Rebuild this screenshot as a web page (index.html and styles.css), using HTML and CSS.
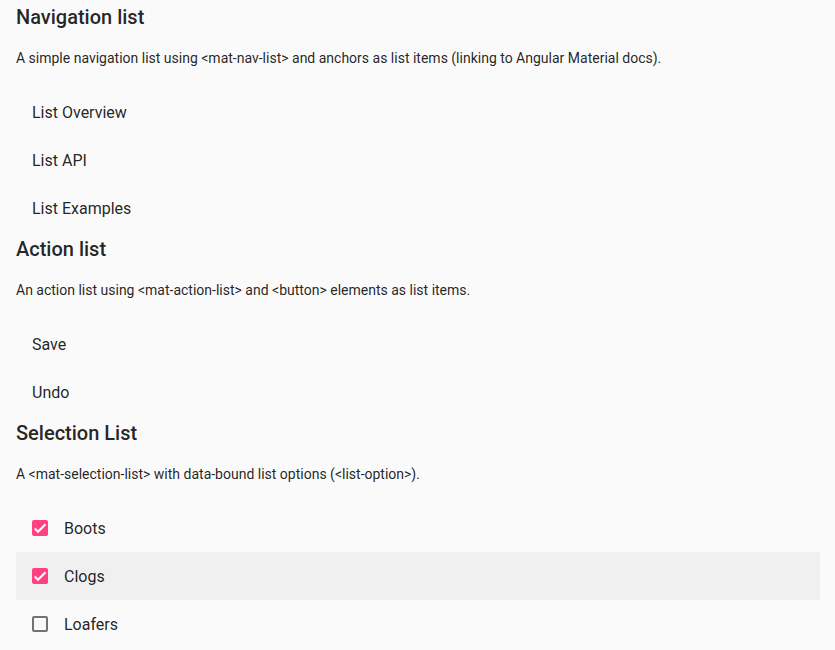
FILE: index.html
```html
<!DOCTYPE html>
<html>
<head>
<meta charset="utf-8">
<link rel="stylesheet" href="styles.css">
</head>
<body>
<div class="page">
  <h2 class="title">Navigation list</h2>
  <p class="desc">A simple navigation list using &lt;mat-nav-list&gt; and anchors as list items (linking to Angular Material docs).</p>
  <div class="list">
    <a class="item">List Overview</a>
    <a class="item">List API</a>
    <a class="item">List Examples</a>
  </div>

  <h2 class="title">Action list</h2>
  <p class="desc">An action list using &lt;mat-action-list&gt; and &lt;button&gt; elements as list items.</p>
  <div class="list">
    <div class="item">Save</div>
    <div class="item">Undo</div>
  </div>

  <h2 class="title">Selection List</h2>
  <p class="desc">A &lt;mat-selection-list&gt; with data-bound list options (&lt;list-option&gt;).</p>
  <div class="list">
    <div class="item option">
      <span class="box checked"><svg viewBox="0 0 24 24" width="16" height="16"><path d="M4.1 12.7 9 17.6 20.3 6.3" fill="none" stroke="#fafafa" stroke-width="3.2"/></svg></span>
      <span>Boots</span>
    </div>
    <div class="item option hover">
      <span class="box checked"><svg viewBox="0 0 24 24" width="16" height="16"><path d="M4.1 12.7 9 17.6 20.3 6.3" fill="none" stroke="#fafafa" stroke-width="3.2"/></svg></span>
      <span>Clogs</span>
    </div>
    <div class="item option">
      <span class="box"></span>
      <span>Loafers</span>
    </div>
  </div>
</div>
</body>
</html>
```

FILE: styles.css
```css
html, body {
  margin: 0;
  padding: 0;
  background: #fafafa;
}
body {
  font-family: Roboto, "Liberation Sans", sans-serif;
  color: rgba(0, 0, 0, 0.87);
}
.page {
  padding: 0 15px 0 16px;
}
.title {
  margin: 0 0 15px;
  padding-top: 1px;
  font-size: 20px;
  font-weight: 500;
  line-height: 32px;
}
.desc {
  margin: 0 0 12px;
  font-size: 14px;
  line-height: 20px;
}
.list {
  padding-top: 8px;
}
.item {
  display: flex;
  align-items: center;
  height: 48px;
  padding: 0 16px;
  font-size: 16px;
  color: rgba(0, 0, 0, 0.87);
  text-decoration: none;
}
.option {
  gap: 16px;
}
.hover {
  background: rgba(0, 0, 0, 0.04);
}
.box {
  box-sizing: border-box;
  width: 16px;
  height: 16px;
  border: 2px solid rgba(0, 0, 0, 0.54);
  border-radius: 2px;
  display: flex;
  align-items: center;
  justify-content: center;
}
.box.checked {
  border: none;
  background: #ff4081;
}
```
